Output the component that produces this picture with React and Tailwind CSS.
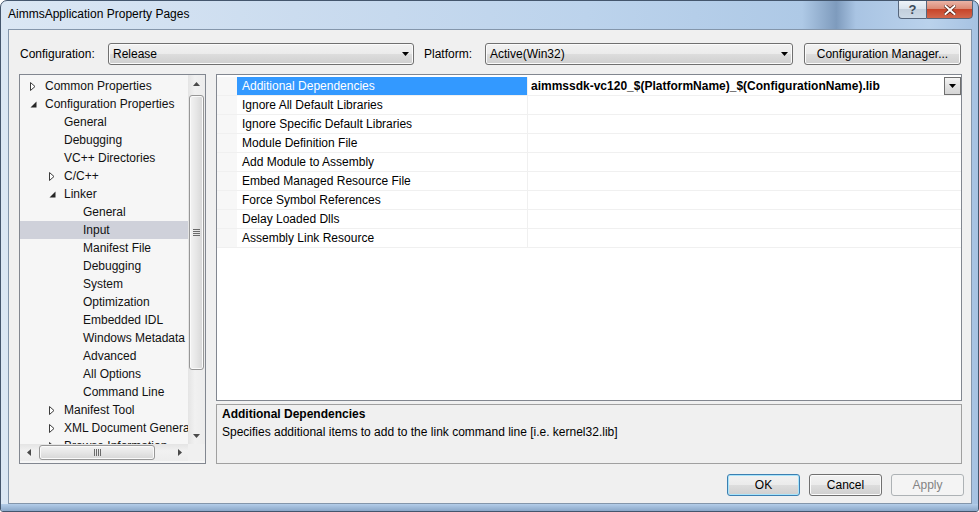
import React from "react";

const treeItems = [
  { t: "Common Properties", lvl: 0, exp: "closed" },
  { t: "Configuration Properties", lvl: 0, exp: "open" },
  { t: "General", lvl: 1 },
  { t: "Debugging", lvl: 1 },
  { t: "VC++ Directories", lvl: 1 },
  { t: "C/C++", lvl: 1, exp: "closed" },
  { t: "Linker", lvl: 1, exp: "open" },
  { t: "General", lvl: 2 },
  { t: "Input", lvl: 2, sel: true },
  { t: "Manifest File", lvl: 2 },
  { t: "Debugging", lvl: 2 },
  { t: "System", lvl: 2 },
  { t: "Optimization", lvl: 2 },
  { t: "Embedded IDL", lvl: 2 },
  { t: "Windows Metadata", lvl: 2 },
  { t: "Advanced", lvl: 2 },
  { t: "All Options", lvl: 2 },
  { t: "Command Line", lvl: 2 },
  { t: "Manifest Tool", lvl: 1, exp: "closed" },
  { t: "XML Document Generator", lvl: 1, exp: "closed" },
  { t: "Browse Information", lvl: 1, exp: "closed" },
];

const indentClass = ["pl-[5px]", "pl-[24px]", "pl-[43px]"];

const props = [
  "Additional Dependencies",
  "Ignore All Default Libraries",
  "Ignore Specific Default Libraries",
  "Module Definition File",
  "Add Module to Assembly",
  "Embed Managed Resource File",
  "Force Symbol References",
  "Delay Loaded Dlls",
  "Assembly Link Resource",
];

function DownArrow({ color = "#000" }) {
  return (
    <svg width="7" height="4" viewBox="0 0 7 4">
      <polygon points="0,0 7,0 3.5,4" fill={color} />
    </svg>
  );
}
function UpArrow({ color = "#4a4a4a" }) {
  return (
    <svg width="7" height="4" viewBox="0 0 7 4">
      <polygon points="0,4 7,4 3.5,0" fill={color} />
    </svg>
  );
}
function LeftArrow({ color = "#4a4a4a" }) {
  return (
    <svg width="4" height="7" viewBox="0 0 4 7">
      <polygon points="4,0 4,7 0,3.5" fill={color} />
    </svg>
  );
}
function RightArrow({ color = "#4a4a4a" }) {
  return (
    <svg width="4" height="7" viewBox="0 0 4 7">
      <polygon points="0,0 0,7 4,3.5" fill={color} />
    </svg>
  );
}

function Expander({ exp }) {
  if (exp === "closed")
    return (
      <svg width="6" height="9" viewBox="0 0 6 9">
        <polygon points="0.5,0.5 5,4.5 0.5,8.5" fill="#ffffff" stroke="#3c3c3c" strokeWidth="1" />
      </svg>
    );
  if (exp === "open")
    return (
      <svg width="7" height="7" viewBox="0 0 7 7">
        <polygon points="6.5,0.5 6.5,6.5 0.5,6.5" fill="#262626" />
      </svg>
    );
  return null;
}

function Combo({ w, text }) {
  return (
    <div
      className={`${w} h-[22px] flex items-center border border-[#707070] rounded-[3px] bg-[linear-gradient(to_bottom,#f2f2f2_0%,#ebebeb_50%,#dddddd_51%,#cfcfcf_100%)] shadow-[inset_0_0_0_1px_#fbfbfb]`}
    >
      <span className="pl-[4px] flex-1 text-[12px] leading-[18px] text-black">{text}</span>
      <span className="pr-[4px] flex items-center">
        <DownArrow />
      </span>
    </div>
  );
}

function Button({ children, kind = "normal", w = "w-[73px]" }) {
  const base =
    "h-[22px] flex items-center justify-center rounded-[3px] text-[12px] leading-[18px] border";
  if (kind === "default")
    return (
      <div
        className={`${base} ${w} border-[#3c7fb1] text-black bg-[linear-gradient(to_bottom,#f2f2f2_0%,#ebebeb_50%,#dddddd_51%,#cfcfcf_100%)] shadow-[inset_0_0_0_1px_#a8e4fb]`}
      >
        {children}
      </div>
    );
  if (kind === "disabled")
    return (
      <div className={`${base} ${w} border-[#adb2b5] bg-[#f4f4f4] text-[#838383]`}>{children}</div>
    );
  return (
    <div
      className={`${base} ${w} border-[#707070] text-black bg-[linear-gradient(to_bottom,#f2f2f2_0%,#ebebeb_50%,#dddddd_51%,#cfcfcf_100%)] shadow-[inset_0_0_0_1px_#fbfbfb]`}
    >
      {children}
    </div>
  );
}

function Tree() {
  return (
    <div className="w-[187px] h-[390px] border border-[#828790] bg-[#f6f6f6] flex flex-col shrink-0">
      <div className="flex flex-1 min-h-0">
        <div className="flex-1 min-w-0 overflow-hidden pt-[2px]">
          {treeItems.map((it, i) => (
            <div
              key={i}
              className={`h-[18px] flex items-center whitespace-nowrap ${indentClass[it.lvl]} ${
                it.sel ? "bg-[#cfd1da]" : ""
              }`}
            >
              <span className="w-[16px] h-[18px] flex items-center justify-center shrink-0">
                <Expander exp={it.exp} />
              </span>
              <span className="ml-[4px] text-[12px] leading-[18px] text-[#111111]">{it.t}</span>
            </div>
          ))}
        </div>
        {/* vertical scrollbar */}
        <div className="w-[17px] flex flex-col bg-[linear-gradient(to_right,#e4e4e4,#f1f1f1_40%,#ececec)] shrink-0">
          <div className="h-[17px] flex items-center justify-center">
            <UpArrow />
          </div>
          <div className="mt-[3px] mx-[1px] h-[275px] rounded-[3px] border border-[#979797] bg-[linear-gradient(to_right,#f3f3f3_0%,#e6e6e6_50%,#d6d6d6_100%)] shadow-[inset_0_0_0_1px_#fafafa] flex flex-col items-center justify-center gap-[1px]">
            <div className="w-[7px] h-[1px] bg-[#6a6a6a]" />
            <div className="w-[7px] h-[1px] bg-[#6a6a6a]" />
            <div className="w-[7px] h-[1px] bg-[#6a6a6a]" />
            <div className="w-[7px] h-[1px] bg-[#6a6a6a]" />
          </div>
          <div className="flex-1" />
          <div className="h-[17px] flex items-center justify-center">
            <DownArrow color="#4a4a4a" />
          </div>
        </div>
      </div>
      {/* horizontal scrollbar */}
      <div className="h-[17px] flex shrink-0 mb-[2px]">
        <div className="flex-1 flex items-center bg-[linear-gradient(to_bottom,#e4e4e4,#f1f1f1_40%,#ececec)]">
          <div className="w-[17px] h-[17px] flex items-center justify-center">
            <LeftArrow />
          </div>
          <div className="ml-[2px] w-[116px] h-[15px] rounded-[3px] border border-[#979797] bg-[linear-gradient(to_bottom,#f3f3f3_0%,#e6e6e6_50%,#d6d6d6_100%)] shadow-[inset_0_0_0_1px_#fafafa] flex items-center justify-center gap-[1px]">
            <div className="w-[1px] h-[7px] bg-[#6a6a6a]" />
            <div className="w-[1px] h-[7px] bg-[#6a6a6a]" />
            <div className="w-[1px] h-[7px] bg-[#6a6a6a]" />
            <div className="w-[1px] h-[7px] bg-[#6a6a6a]" />
          </div>
          <div className="flex-1" />
          <div className="w-[17px] h-[17px] flex items-center justify-center">
            <RightArrow />
          </div>
        </div>
        <div className="w-[17px] bg-[#f0f0f0]" />
      </div>
    </div>
  );
}

function Grid() {
  return (
    <div className="h-[327px] border border-[#828790] bg-white pt-[2px] shrink-0">
      {props.map((p, i) => (
        <div key={i} className="h-[19px] flex border-b border-[#f0f0f0]">
          <div className="w-[20px] bg-[#f7f7f7]" />
          <div
            className={`w-[291px] border-r border-[#f0f0f0] pl-[5px] text-[12px] leading-[18px] whitespace-nowrap ${
              i === 0 ? "bg-[#3399ff] text-white" : "text-black"
            }`}
          >
            {p}
          </div>
          <div className="flex-1 flex items-start">
            {i === 0 && (
              <>
                <span className="flex-1 pl-[3px] text-[12px] leading-[18px] font-bold text-black whitespace-nowrap">
                  aimmssdk-vc120_$(PlatformName)_$(ConfigurationName).lib
                </span>
                <span className="w-[17px] h-[18px] border border-[#6f6f6f] bg-[linear-gradient(to_bottom,#f4f4f4,#e2e2e2_50%,#d5d5d5)] flex items-center justify-center">
                  <DownArrow />
                </span>
              </>
            )}
          </div>
        </div>
      ))}
    </div>
  );
}

function Client() {
  return (
    <div className="w-[964px] h-[475px] border border-[#8496ab] bg-[#f0f0f0] flex flex-col shrink-0">
      <div className="flex items-center mt-[13px] ml-[11px] h-[22px]">
        <span className="w-[88px] text-[12px] leading-[18px] text-black">Configuration:</span>
        <Combo w="w-[306px]" text="Release" />
        <span className="ml-[10px] w-[61px] text-[12px] leading-[18px] text-black">Platform:</span>
        <Combo w="w-[308px]" text="Active(Win32)" />
        <div className="ml-[11px]">
          <Button w="w-[157px]">Configuration Manager...</Button>
        </div>
      </div>
      <div className="flex mt-[9px] ml-[10px] h-[390px]">
        <Tree />
        <div className="ml-[10px] w-[746px] flex flex-col gap-[3px]">
          <Grid />
          <div className="h-[60px] border border-[#a0a0a0] bg-[#f0f0f0] pl-[5px] text-[12px] leading-[18px] text-black">
            <div className="font-bold">Additional Dependencies</div>
            <div>Specifies additional items to add to the link command line [i.e. kernel32.lib]</div>
          </div>
        </div>
      </div>
      <div className="flex justify-end gap-[9px] mt-[10px] mr-[7px]">
        <Button kind="default">OK</Button>
        <Button>Cancel</Button>
        <Button kind="disabled">Apply</Button>
      </div>
    </div>
  );
}

export default function App() {
  return (
    <div className="w-[979px] h-[512px] bg-white font-['Segoe_UI','Liberation_Sans',Arial,sans-serif]">
      <div className="w-[979px] h-[512px] flex flex-col border border-[#44566d] rounded-t-[7px] rounded-b-[3px] overflow-hidden bg-[linear-gradient(to_right,#dbe7f4_0%,#cbdcef_30%,#bcd3ec_60%,#aec9e6_82%,#7e9bbd_85.5%,#a9c4e3_87.5%,#bad2ec_95%,#a6c2e2_100%)]">
        <div className="h-[28px] flex items-start shrink-0">
          <div className="pl-[7px] pt-[4px] text-[12px] leading-[18px] text-black">
            AimmsApplication Property Pages
          </div>
          <div className="flex-1" />
          <div className="flex -mt-px mr-[5px]">
            <div className="w-[28px] h-[19px] border border-[#56667c] border-r-0 rounded-bl-[4px] bg-[linear-gradient(to_bottom,#eef3f8_0%,#dbe4ee_45%,#c3cfdc_50%,#ccd9e6_100%)] flex items-center justify-center text-[13px] leading-[14px] font-bold text-[#3d4a5a]">
              ?
            </div>
            <div className="w-[47px] h-[19px] border border-[#56667c] rounded-br-[4px] bg-[linear-gradient(to_bottom,#eab3a6_0%,#dc8b76_45%,#c8452a_50%,#d2674c_100%)] flex items-center justify-center">
              <svg width="12" height="10" viewBox="0 0 12 10">
                <path d="M1.5 1 L10.5 9 M10.5 1 L1.5 9" stroke="#5a2418" strokeWidth="3.6" strokeLinecap="square" />
                <path d="M1.5 1 L10.5 9 M10.5 1 L1.5 9" stroke="#ffffff" strokeWidth="2" strokeLinecap="square" />
              </svg>
            </div>
          </div>
        </div>
        <div className="flex flex-1 min-h-0">
          <div className="w-[7px] shrink-0" />
          <Client />
        </div>
        <div className="h-[7px] shrink-0 bg-[linear-gradient(to_bottom,#b4cde9,#8aa7c8)]" />
      </div>
    </div>
  );
}
